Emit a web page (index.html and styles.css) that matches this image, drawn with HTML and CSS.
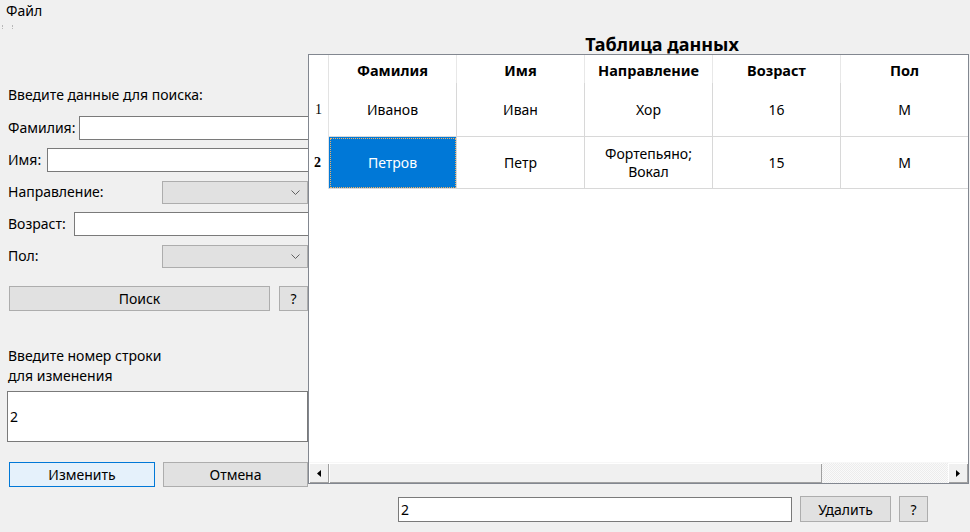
FILE: index.html
```html
<!DOCTYPE html>
<html lang="ru">
<head>
<meta charset="utf-8">
<title>Таблица данных</title>
<link rel="stylesheet" href="styles.css">
</head>
<body>
<div class="window">
  <div class="menubar"><span class="menu-item">Файл</span></div>
  <div class="grip"><i></i><i></i></div>
  <div class="main">
    <section class="left">
      <p class="heading">Введите данные для поиска:</p>
      <div class="fields">
        <div class="field"><label class="lbl lbl-fam">Фамилия:</label><div class="textbox grow"></div></div>
        <div class="field"><label class="lbl lbl-name">Имя:</label><div class="textbox grow"></div></div>
        <div class="field"><label class="lbl lbl-combo">Направление:</label><div class="combo grow"><svg class="chev" width="9" height="5" viewBox="0 0 9 5"><polyline points="0.5,0.5 4.5,4.5 8.5,0.5" fill="none" stroke="#606060" stroke-width="1"/></svg></div></div>
        <div class="field"><label class="lbl lbl-age">Возраст:</label><div class="textbox grow"></div></div>
        <div class="field"><label class="lbl lbl-combo">Пол:</label><div class="combo grow"><svg class="chev" width="9" height="5" viewBox="0 0 9 5"><polyline points="0.5,0.5 4.5,4.5 8.5,0.5" fill="none" stroke="#606060" stroke-width="1"/></svg></div></div>
      </div>
      <div class="btn-row search-row">
        <button class="btn btn-search">Поиск</button>
        <button class="btn btn-q">?</button>
      </div>
      <p class="edit-caption">Введите номер строки<br>для изменения</p>
      <div class="textbox multiline">2</div>
      <div class="btn-row edit-row">
        <button class="btn btn-edit">Изменить</button>
        <button class="btn btn-cancel">Отмена</button>
      </div>
    </section>
    <section class="right">
      <h1 class="title">Таблица данных</h1>
      <div class="grid-frame">
        <div class="grid-view">
          <div class="grid">
            <div class="corner"></div>
            <div class="hcell">Фамилия</div>
            <div class="hcell">Имя</div>
            <div class="hcell">Направление</div>
            <div class="hcell">Возраст</div>
            <div class="hcell">Пол</div>

            <div class="rowhead">1</div>
            <div class="cell r1">Иванов</div>
            <div class="cell r1">Иван</div>
            <div class="cell r1">Хор</div>
            <div class="cell r1">16</div>
            <div class="cell r1">М</div>

            <div class="rowhead current">2</div>
            <div class="cell r2 selected"><span>Петров</span></div>
            <div class="cell r2">Петр</div>
            <div class="cell r2">Фортепьяно;<br>Вокал</div>
            <div class="cell r2">15</div>
            <div class="cell r2">М</div>
          </div>
        </div>
        <div class="hscroll">
          <div class="sb-btn"><svg width="4" height="7" viewBox="0 0 4 7"><polygon points="4,0 0,3.5 4,7" fill="#000"/></svg></div>
          <div class="sb-thumb"></div>
          <div class="sb-track"></div>
          <div class="sb-btn"><svg width="4" height="7" viewBox="0 0 4 7"><polygon points="0,0 4,3.5 0,7" fill="#000"/></svg></div>
        </div>
      </div>
      <div class="bottom-row">
        <div class="textbox del-box">2</div>
        <button class="btn btn-del">Удалить</button>
        <button class="btn btn-q">?</button>
      </div>
    </section>
  </div>
</div>
</body>
</html>
```

FILE: styles.css
```css
* { box-sizing: border-box; }
html, body { margin: 0; padding: 0; }
body {
  width: 970px;
  height: 532px;
  overflow: hidden;
  background: #f0f0f0;
  font-family: "Noto Sans", "Open Sans", sans-serif;
  font-size: 14px;
  color: #000;
}
.window { width: 970px; height: 532px; }

.menubar { height: 22px; padding-left: 6px; display: flex; align-items: center; }
.menu-item { line-height: 16px; }

.grip { height: 10px; display: flex; gap: 8px; padding: 3px 0 0 2px; }
.grip i { display: block; width: 2px; height: 4px; border-left: 1px dotted #b8b8b8; }

.main { display: flex; height: 500px; }

/* ---------- left panel ---------- */
.left { width: 308px; flex: none; overflow: hidden; padding-left: 8px; }
.heading { margin: 55px 0 0; line-height: 16px; }
.fields { margin-top: 13px; display: flex; flex-direction: column; gap: 8px; }
.field { display: flex; align-items: center; height: 24px; }
.lbl { flex: none; line-height: 16px; }
.lbl-fam { width: 71px; }
.lbl-name { width: 39px; }
.lbl-age { width: 66px; }
.lbl-combo { width: 154px; }
.grow { flex: 1; }
.textbox {
  background: #fff;
  border: 1px solid #7a7a7a;
  height: 24px;
  padding: 0 3px;
  line-height: 22px;
}
.field .textbox { margin-right: -3px; }
.combo {
  height: 23px;
  background: #e1e1e1;
  border: 1px solid #adadad;
  display: flex;
  align-items: center;
  justify-content: flex-end;
  padding-right: 7px;
}
.chev { display: block; }

.btn-row { display: flex; gap: 9px; }
.btn {
  font: inherit;
  color: #000;
  background: #e1e1e1;
  border: 1px solid #adadad;
  height: 25px;
  padding: 0;
  margin: 0;
}
.search-row { margin-top: 18px; margin-left: 1px; }
.btn-search { width: 261px; }
.btn-q { width: 29px; }
.edit-caption { margin: 35px 0 0; line-height: 20px; }
.multiline {
  margin-top: 5px;
  margin-left: -1px;
  width: 301px;
  height: 51px;
  line-height: 49px;
  padding-left: 2px;
}
.edit-row { margin-top: 20px; margin-left: 1px; gap: 8px; }
.btn-edit { width: 146px; background: #e5f1fb; border-color: #0078d7; }
.btn-cancel { width: 145px; }

/* ---------- right panel ---------- */
.right { flex: none; width: 662px; }
.title {
  margin: 0;
  height: 22px;
  font-size: 18px;
  font-weight: bold;
  line-height: 24px;
  text-align: center;
  padding-left: 46px;
}
.grid-frame {
  width: 661px;
  height: 430px;
  border: 1px solid #828790;
  background: #fff;
  display: flex;
  flex-direction: column;
}
.grid-view { flex: 1; overflow: hidden; }
.grid {
  display: grid;
  grid-template-columns: 20px repeat(5, 128px);
  grid-template-rows: 28px 54px 52px;
  width: 660px;
}
.corner { border-right: 1px solid #e3e3e3; }
.hcell {
  border-right: 1px solid #e8e8e8;
  font-weight: bold;
  font-size: 14.5px;
  display: flex;
  align-items: center;
  justify-content: center;
  padding-top: 2px;
}
.rowhead {
  border-right: 1px solid #e3e3e3;
  font-family: "Liberation Serif", serif;
  font-size: 14px;
  display: flex;
  align-items: center;
  padding-left: 6px;
}
.rowhead.current { font-weight: bold; padding-left: 5px; }
.cell {
  border-right: 1px solid #d8d8d8;
  border-bottom: 1px solid #d8d8d8;
  display: flex;
  align-items: center;
  justify-content: center;
  text-align: center;
  line-height: 18px;
}
.cell.selected {
  background: #0078d7;
  color: #fff;
  outline: 1px dotted #f0b060;
  outline-offset: -2px;
}

.hscroll { height: 21px; display: flex; background: #f0f0f0; border-top: 1px solid #f7f7f7; }
.sb-btn {
  width: 20px;
  flex: none;
  display: flex;
  align-items: center;
  justify-content: center;
  background: #f0f0f0;
  box-shadow: inset 1px 1px #fff, inset -1px -1px #a0a0a0;
}
.sb-thumb {
  width: 493px;
  flex: none;
  background: #f0f0f0;
  box-shadow: inset 1px 1px #fff, inset -1px -1px #a0a0a0;
}
.sb-track {
  flex: 1;
  background: repeating-conic-gradient(#ececec 0 25%, #fafafa 0 50%) 0 0 / 2px 2px;
}

.bottom-row { display: flex; align-items: center; gap: 8px; margin-top: 12px; padding-left: 90px; }
.del-box { width: 394px; height: 25px; line-height: 23px; padding-left: 2px; }
.btn-del { width: 91px; height: 26px; }
.bottom-row .btn-q { height: 26px; }
```
